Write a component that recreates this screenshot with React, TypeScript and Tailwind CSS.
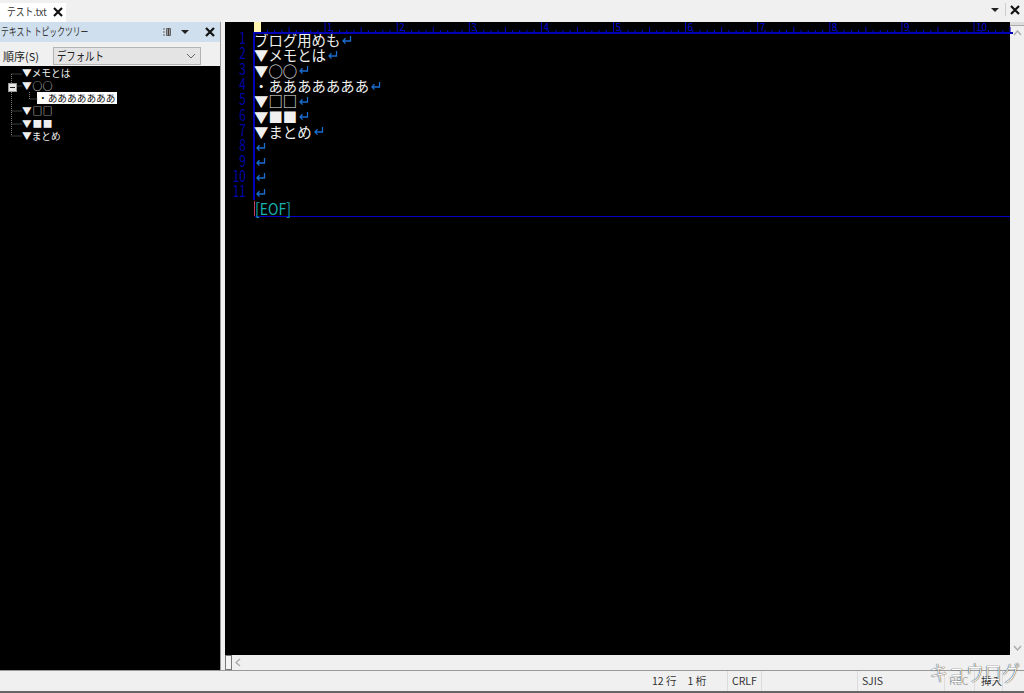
const font = { fontFamily: '"Noto Sans CJK JP", "Noto Sans", sans-serif' };

function Ret() {
  return (
    <svg width="11" height="10" viewBox="0 0 11 10" className="ml-[1px] shrink-0" fill="none" stroke="#1a6cd0" strokeWidth="1.3">
      <path d="M9.5 1v5H2M4.5 3.2 2 6l2.5 2.6" />
    </svg>
  );
}

function X({ size = 10 }: { size?: number }) {
  return (
    <svg width={size} height={size} viewBox="0 0 10 10" stroke="#111" strokeWidth="2.2">
      <path d="M1 1l8 8M9 1l-8 8" />
    </svg>
  );
}

function Down() {
  return (
    <svg width="8" height="4" viewBox="0 0 8 4" fill="#222">
      <path d="M0 0h8L4 4z" />
    </svg>
  );
}

function Ruler() {
  const ticks = [];
  for (let i = 1; i <= 105; i++) {
    const x = i * 7.21;
    const h = i % 10 === 0 ? 10 : i % 5 === 0 ? 5 : 2;
    ticks.push(<path key={i} d={`M${x} 10V${10 - h}`} />);
  }
  return (
    <div className="relative h-[12px] flex-1 border-b-2 border-[#0000b4]">
      <svg width="760" height="10" stroke="#0000c8" strokeWidth="1">{ticks}</svg>
      <div className="absolute left-[1px] top-0 h-[10px] w-[7px] bg-[#fff3b0]" />
      {[1, 2, 3, 4, 5, 6, 7, 8, 9, 10].map((n) => (
        <span
          key={n}
          className="absolute top-0 text-[10px] leading-[10px] text-[#0000d8]"
          style={{ left: n * 72.1 + 2 }}
        >
          {n}
        </span>
      ))}
    </div>
  );
}

const lines: string[] = [
  "ブログ用めも",
  "▼メモとは",
  "▼○○",
  "・あああああああ",
  "▼□□",
  "▼■■",
  "▼まとめ",
  "",
  "",
  "",
  "",
];

function Editor() {
  return (
    <div className="flex min-w-0 flex-1 flex-col bg-black">
      <div className="flex h-[12px]">
        <div className="w-[28px] shrink-0" />
        <Ruler />
      </div>
      <div className="-mt-[2px] flex flex-col">
        {lines.map((t, i) => (
          <div key={i} className="flex h-[15.3px] items-center">
            <span className="w-[21px] shrink-0 origin-right -translate-y-[2px] scale-x-[0.75] text-right text-[16px] leading-[15px] text-[#0000a8]">
              {i + 1}
            </span>
            <span className="ml-[7px] -mr-[1px] h-full w-[2px] shrink-0 bg-[#0000b8]" />
            <span className="whitespace-nowrap text-[14.4px] leading-[15px] text-[#f0f0f0]">
              {t}
            </span>
            <Ret />
          </div>
        ))}
        <div className="flex h-[16px] items-center pl-[29px] text-[16px] leading-[15px] text-[#18b0b0]">
          <span className="origin-left scale-x-[0.88] border-l border-[#e04060]">[EOF]</span>
        </div>
        <div className="ml-[30px] h-[1px] bg-[#0000c8]" />
      </div>
    </div>
  );
}

function Tree() {
  const row = "h-[12.6px] flex items-center whitespace-nowrap text-[9.7px] leading-[12px] text-[#f0f0f0]";
  return (
    <div className="relative flex-1 bg-black pl-[22px] pt-[1px]">
      <svg className="absolute left-[8px] top-0" width="32" height="76" fill="none" stroke="#777" strokeDasharray="1 1">
        <path d="M3.5 8H14M3.5 8V70M3.5 20H14M3.5 45H14M3.5 58H14M3.5 70H14M21.5 26V33H30" />
      </svg>
      <div className="absolute left-[8px] top-[17px] flex h-[9px] w-[9px] items-center justify-center border border-[#999] bg-[#e8e8e8]">
        <div className="h-[1px] w-[5px] bg-[#222]" />
      </div>
      <div className={row}>▼メモとは</div>
      <div className={`${row} tracking-[0.7px]`}>▼○○</div>
      <div className={row}>
        <span className="ml-[15px] bg-white px-[1px] text-[#111]">・あああああああ</span>
      </div>
      <div className={`${row} tracking-[0.7px]`}>▼□□</div>
      <div className={`${row} tracking-[0.7px]`}>▼■■</div>
      <div className={row}>▼まとめ</div>
    </div>
  );
}

function Sidebar() {
  return (
    <div className="flex w-[220px] shrink-0 flex-col">
      <div className="flex h-[20px] items-center bg-[#cfdfee] pb-[1px] pl-[1px] pr-[5px] text-[11px] text-[#333]">
        <span className="flex-1 origin-left scale-x-[0.71] whitespace-nowrap">テキスト トピックツリー</span>
        <svg className="mr-[9px]" width="10" height="10" viewBox="0 0 10 10" fill="none" stroke="#666">
          <path d="M1 2h2M1 5h2M1 8h2" />
          <path d="M4.5 1.5h4v7h-4z" fill="#999" />
          <path d="M6.5 1v8" stroke="#444" />
        </svg>
        <span className="mr-[16px]"><Down /></span>
        <X />
      </div>
      <div className="flex h-[24px] items-end bg-[#f0f0f0] pb-[1px] pl-[3px] pr-[19px] text-[11px] text-[#222]">
        <span className="h-[18px] w-[50px] shrink-0 leading-[18px]">順序(S)</span>
        <div className="flex h-[18px] flex-1 items-center justify-between border border-[#b4b4b4] bg-[#e4e4e4] pl-[3px] pr-[4px] text-[12px]">
          <span className="origin-left scale-x-[0.78] whitespace-nowrap">デフォルト</span>
          <svg width="10" height="6" viewBox="0 0 10 6" fill="none" stroke="#666"><path d="M1 1l4 4 4-4" /></svg>
        </div>
      </div>
      <Tree />
    </div>
  );
}

function StatusCell({ w, children, cls = "" }: { w: string; children?: React.ReactNode; cls?: string }) {
  return <div className={`flex h-full items-center border-r border-[#dcdcdc] pl-[4px] ${w} ${cls}`}>{children}</div>;
}

export default function App() {
  return (
    <div className="relative flex h-[693px] w-[1024px] flex-col overflow-hidden bg-[#f0f0f0] text-[#222]" style={font}>
      {/* Tabs */}
      <div className="flex h-[22px] shrink-0 items-end bg-[#f0f0f0]">
        <div className="flex h-[19px] w-[66px] items-center bg-white pb-[2px] pl-[7px] text-[11px] text-[#333]">
          <span className="w-[46px] origin-left scale-x-[0.8] whitespace-nowrap">テスト.txt</span>
          <X />
        </div>
        <div className="flex-1" />
        <div className="flex h-[22px] items-center pb-[3px]">
          <Down />
          <div className="ml-[6px] mr-[4px] h-[13px] w-[1px] bg-[#ccc]" />
          <span className="mr-[4px]"><X /></span>
        </div>
      </div>

      {/* Body */}
      <div className="flex min-h-0 flex-1">
        <Sidebar />
        <div className="w-[5px] shrink-0 border-l border-[#999] bg-[#f0f0f0]" />
        <div className="flex min-w-0 flex-1 flex-col">
          <div className="flex min-h-0 flex-1">
            <Editor />
            <div className="flex w-[14px] shrink-0 flex-col items-center bg-[#f0f0f0]">
              <div className="h-[4px] w-full border-b border-[#aaa] bg-[#ddd]" />
              <svg className="mt-[4px]" width="9" height="6" viewBox="0 0 9 6" fill="none" stroke="#aaa" strokeWidth="1.4"><path d="M1 5l3.5-4L8 5" /></svg>
              <div className="flex-1" />
              <svg className="mb-[4px]" width="9" height="6" viewBox="0 0 9 6" fill="none" stroke="#aaa" strokeWidth="1.4"><path d="M1 1l3.5 4L8 1" /></svg>
            </div>
          </div>
          <div className="flex h-[15px] shrink-0 items-center bg-[#f0f0f0]">
            <div className="h-[15px] w-[7px] border border-[#777] bg-[#f4f4f4]" />
            <svg className="ml-[3px]" width="6" height="9" viewBox="0 0 6 9" fill="none" stroke="#aaa" strokeWidth="1.4"><path d="M5 1L1 4.5 5 8" /></svg>
          </div>
        </div>
      </div>

      {/* Status bar */}
      <div className="flex h-[23px] shrink-0 items-center border-t border-[#999] border-b-2 border-b-[#666] bg-[#f0f0f0] pl-[652px] text-[10.5px] text-[#333]">
        <div className="flex h-full w-[76px] items-center border-r border-[#dcdcdc]">
          <span>12 行</span>
          <span className="ml-[11px]">1 桁</span>
        </div>
        <StatusCell w="w-[34px]">CRLF</StatusCell>
        <StatusCell w="w-[96px]" />
        <StatusCell w="w-[87px]">SJIS</StatusCell>
        <StatusCell w="w-[30px]" cls="text-[#aaa]">REC</StatusCell>
        <StatusCell w="w-[28px]"><span className="ml-[2px]">挿入</span></StatusCell>
      </div>

      {/* Watermark */}
      <div className="pointer-events-none absolute bottom-[10px] right-[4px] origin-right scale-x-[0.82] whitespace-nowrap text-[22px] font-light leading-[24px] text-white [text-shadow:0_0_1px_#333,0_0_1px_#333]">
        キョウログ
      </div>
    </div>
  );
}
